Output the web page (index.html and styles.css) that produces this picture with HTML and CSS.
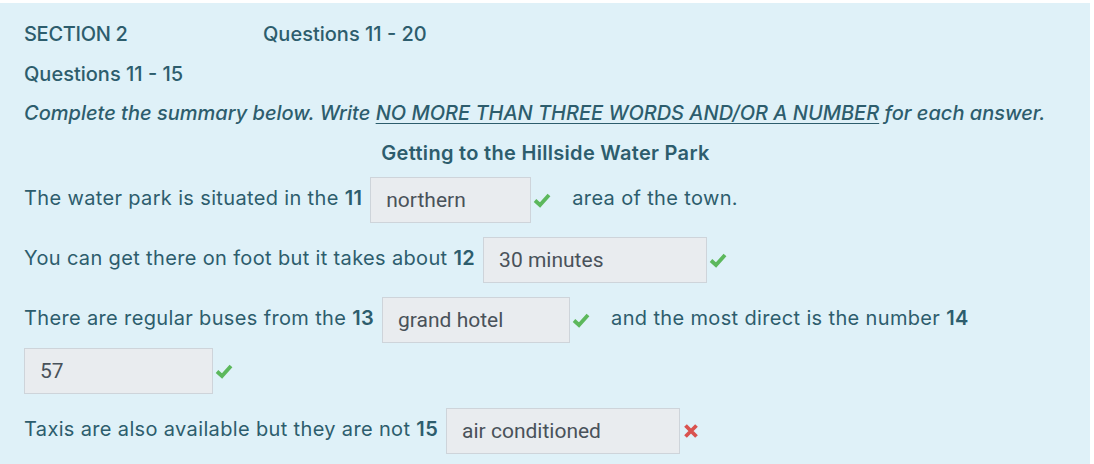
FILE: index.html
```html
<!DOCTYPE html>
<html lang="en">
<head>
<meta charset="utf-8">
<title>Section 2</title>
<link rel="stylesheet" href="styles.css">
</head>
<body>
<div class="panel">
  <div class="head-row">
    <span class="sec">SECTION 2</span>
    <span class="range">Questions 11 - 20</span>
  </div>
  <div class="sub">Questions 11 - 15</div>
  <div class="instr">Complete the summary below. Write <u>NO MORE THAN THREE WORDS AND/OR A NUMBER</u> for each answer.</div>
  <div class="title">Getting to the Hillside Water Park</div>

  <p class="q">The water park is situated in the <b>11</b> <span class="ans w1">northern</span><svg class="mark ok" viewBox="0 0 20 20"><path d="M3 10.5 L8 15 L17 5"/></svg><span class="after">area of the town.</span></p>

  <p class="q">You can get there on foot but it takes about <b>12</b> <span class="ans w2">30 minutes</span><svg class="mark ok" viewBox="0 0 20 20"><path d="M3 10.5 L8 15 L17 5"/></svg></p>

  <p class="q">There are regular buses from the <b>13</b> <span class="ans w3">grand hotel</span><svg class="mark ok" viewBox="0 0 20 20"><path d="M3 10.5 L8 15 L17 5"/></svg><span class="after">and the most direct is the number <b>14</b></span> <span class="ans w4">57</span><svg class="mark ok" viewBox="0 0 20 20"><path d="M3 10.5 L8 15 L17 5"/></svg></p>

  <p class="q">Taxis are also available but they are not <b>15</b> <span class="ans w5">air conditioned</span><svg class="mark bad" viewBox="0 0 20 20"><path d="M4.5 4.5 L15.5 15.5 M15.5 4.5 L4.5 15.5"/></svg></p>
</div>
</body>
</html>
```

FILE: styles.css
```css
html, body {
  margin: 0;
  padding: 0;
  background: #ffffff;
}

body {
  font-family: Inter, "Open Sans", "Liberation Sans", sans-serif;
  color: #2d5d6d;
}

.panel {
  margin-top: 3px;
  width: 1090px;
  height: 461px;
  box-sizing: border-box;
  background: #dff1f8;
  padding: 18px 0 0 24px;
}

.head-row {
  display: flex;
  height: 26px;
  align-items: center;
  font-size: 20px;
  font-weight: 500;
  letter-spacing: -0.3px;
}

.range {
  letter-spacing: 0;
}

.sec {
  width: 239px;
}

.sub {
  margin-top: 14px;
  height: 26px;
  line-height: 26px;
  font-size: 20px;
  font-weight: 500;
  letter-spacing: 0;
}

.instr {
  margin-top: 13px;
  height: 26px;
  line-height: 26px;
  font-size: 20px;
  font-weight: 500;
  font-style: italic;
  letter-spacing: 0;
}

.instr u {
  text-decoration-thickness: 1px;
  text-underline-offset: 3px;
}

.title {
  margin-top: 14px;
  width: 1043px;
  text-align: center;
  height: 26px;
  line-height: 26px;
  font-size: 20px;
  font-weight: 600;
  letter-spacing: 0.3px;
}

.q {
  margin: 0 0 9px 0;
  width: 1000px;
  font-size: 20px;
  line-height: 51px;
  letter-spacing: 0.35px;
}

.title + .q {
  margin-top: 7px;
}

.q b {
  font-weight: 600;
}

.ans {
  display: inline-block;
  vertical-align: middle;
  box-sizing: border-box;
  height: 46px;
  line-height: 44px;
  padding: 0 15px;
  background: #e9ecef;
  border: 1px solid #ced4da;
  font-family: Roboto, "Liberation Sans", sans-serif;
  font-size: 21px;
  letter-spacing: 0;
  color: #49525a;
  margin-left: 2px;
}

.w1 { width: 161px; }
.w2 { width: 224px; }
.w3 { width: 188px; }
.w4 { width: 189px; margin-left: 0; }
.w5 { width: 234px; }

.mark {
  width: 20px;
  height: 20px;
  vertical-align: middle;
  margin-left: 1px;
  fill: none;
}

.mark.ok path {
  stroke: #5cb85c;
  stroke-width: 3.8;
}

.mark.bad path {
  stroke: #d9534f;
  stroke-width: 3.8;
}

.after {
  margin-left: 20px;
}
```
